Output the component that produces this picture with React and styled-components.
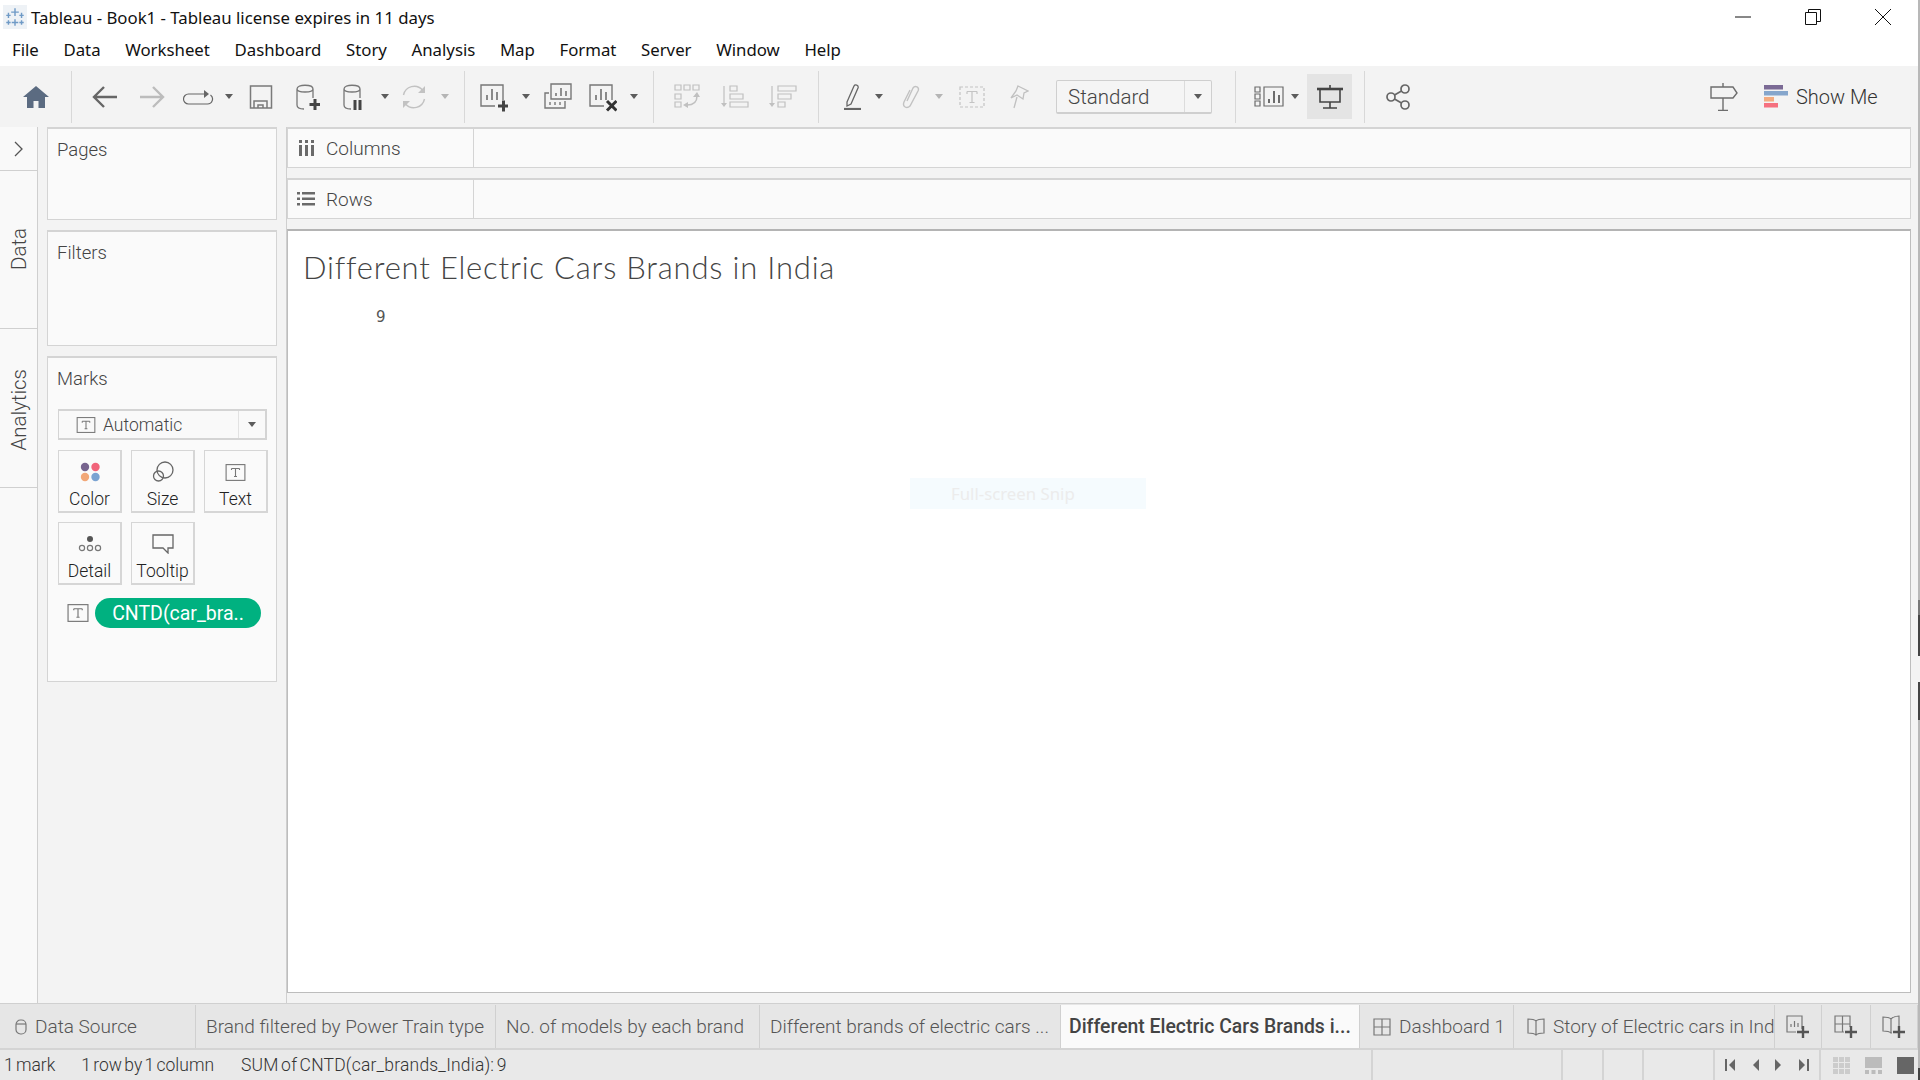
import React from "react"
import styled, { createGlobalStyle } from "styled-components"

const GlobalStyle = createGlobalStyle`
  html, body {
    margin: 0;
    padding: 0;
    background: #fff;
    overflow: hidden;
  }
  * {
    box-sizing: border-box;
  }
`

const uiFont = `"Roboto", "Liberation Sans", sans-serif`
const winFont = `"Noto Sans", "Open Sans", sans-serif`

const Window = styled.div`
  width: 1920px;
  height: 1080px;
  display: flex;
  flex-direction: column;
  background: #f3f3f3;
  padding-right: 2px;
  font-family: ${uiFont};
  color: #555;
  position: relative;
  overflow: hidden;
`
const EdgeStrip = styled.div`
  position: absolute;
  top: 0;
  right: 0;
  bottom: 0;
  width: 2px;
  background: linear-gradient(
    to bottom,
    #b8b8b8 0 600px,
    #777 600px 615px,
    #444 615px 656px,
    #f3f3f3 656px 682px,
    #444 682px 720px,
    #b8b8b8 720px 1068px,
    #444 1068px
  );
`
const TitleBar = styled.div`
  height: 33px;
  flex: none;
  display: flex;
  align-items: center;
  background: #fff;
  padding: 1px 0 0 3px;
  font-family: ${winFont};
  font-size: 16.8px;
  color: #111;
`
const TitleText = styled.span`
  margin-left: 4px;
`
const WinButtons = styled.div`
  margin-left: auto;
  display: flex;
  align-items: center;
`
const WinButton = styled.div`
  width: 70px;
  display: flex;
  justify-content: center;
`
const MenuBar = styled.div`
  height: 33px;
  flex: none;
  display: flex;
  align-items: center;
  background: #fff;
  padding-left: 12px;
  gap: 24.6px;
  font-family: ${winFont};
  font-size: 16.8px;
  color: #111;
`
const Toolbar = styled.div`
  height: 61px;
  flex: none;
  display: flex;
  align-items: center;
  padding-left: 22px;
  background: #f3f3f3;
`
const Tool = styled.div`
  flex: none;
  width: ${(p) => p.$w || 24}px;
  margin-left: ${(p) => p.$ml || 0}px;
  display: flex;
  justify-content: center;
  align-items: center;
`
const Caret = styled.div`
  flex: none;
  width: 0;
  height: 0;
  margin-left: ${(p) => p.$ml || 0}px;
  border-left: 4px solid transparent;
  border-right: 4px solid transparent;
  border-top: 5px solid ${(p) => (p.$off ? "#b5b5b5" : "#5c5c5c")};
`
const ToolSep = styled.div`
  flex: none;
  width: 1px;
  height: 52px;
  margin-left: ${(p) => p.$ml || 0}px;
  background: #d8d8d8;
`
const FitSelect = styled.div`
  flex: none;
  width: 156px;
  height: 34px;
  margin-left: ${(p) => p.$ml || 0}px;
  display: flex;
  align-items: center;
  border: 1px solid #cfcfcf;
  border-bottom-width: 2px;
  border-radius: 2px;
  background: #f5f5f5;
  font-size: 20.5px;
  font-weight: 300;
  color: #444;
`
const FitLabel = styled.div`
  flex: 1;
  padding: 1px 0 0 11px;
`
const FitArrow = styled.div`
  width: 27px;
  height: 100%;
  border-left: 1px solid #dcdcdc;
  display: flex;
  align-items: center;
  justify-content: center;
`
const PresentButton = styled.div`
  flex: none;
  width: 45px;
  height: 45px;
  margin-left: ${(p) => p.$ml || 0}px;
  background: #e4e4e4;
  display: flex;
  align-items: center;
  justify-content: center;
`
const ShowMeLabel = styled.div`
  margin-left: 8px;
  font-size: 20px;
  font-weight: 300;
  color: #333;
`
const Main = styled.div`
  flex: 1;
  min-height: 0;
  display: flex;
`
const Rail = styled.div`
  width: 38px;
  flex: none;
  display: flex;
  flex-direction: column;
  border-right: 1px solid #cfcfcf;
  background: #f9f9f9;
`
const RailToggle = styled.div`
  height: 44px;
  flex: none;
  display: flex;
  align-items: center;
  justify-content: center;
  border-bottom: 1px solid #d0d0d0;
`
const RailTab = styled.div`
  height: ${(p) => p.$h}px;
  flex: none;
  display: flex;
  align-items: center;
  justify-content: center;
  padding-top: ${(p) => p.$pt || 0}px;
  border-bottom: 1px solid #d0d0d0;
`
const RailLabel = styled.span`
  writing-mode: vertical-rl;
  transform: rotate(180deg);
  font-size: 20.5px;
  font-weight: 300;
  color: #444;
`
const Cards = styled.div`
  width: 249px;
  flex: none;
  padding: 0 9px 0 9px;
  display: flex;
  flex-direction: column;
  gap: 10px;
  border-right: 1px solid #cfcfcf;
`
const Card = styled.section`
  height: ${(p) => p.$h}px;
  flex: none;
  background: #fafafa;
  border: 1px solid #d4d4d4;
  border-top-width: 2px;
  padding: 0 9px;
`
const CardTitle = styled.div`
  font-size: 18.5px;
  font-weight: 300;
  color: #444;
  height: 41px;
  display: flex;
  align-items: center;
`
const MarkType = styled.div`
  height: 31px;
  margin: 10px 0 0 1px;
  display: flex;
  align-items: center;
  border: 1px solid #d4d4d4;
  border-width: 2px 2px 2px 1px;
  background: #f9f9f9;
`
const MarkTypeLabel = styled.div`
  flex: 1;
  display: flex;
  align-items: center;
  gap: 7px;
  padding-left: 17px;
  font-size: 17.5px;
  font-weight: 300;
  color: #444;
`
const MarkTypeArrow = styled.div`
  width: 27px;
  height: 100%;
  border-left: 1px solid #e2e2e2;
  display: flex;
  align-items: center;
  justify-content: center;
`
const MarkGrid = styled.div`
  display: grid;
  grid-template-columns: repeat(3, 64px);
  grid-auto-rows: 63px;
  gap: 9px;
  margin: 10px 0 0 1px;
`
const MarkButton = styled.div`
  border: 2px solid #d6d6d6;
  border-top-width: 1px;
  border-left-width: 1px;
  background: #fafafa;
  display: flex;
  flex-direction: column;
  align-items: center;
  justify-content: flex-end;
  gap: 5px;
  padding-bottom: 2px;
  font-size: 17.5px;
  font-weight: 300;
  color: #222;
`
const MarkIcon = styled.div`
  height: 24px;
  display: flex;
  align-items: center;
`
const PillRow = styled.div`
  display: flex;
  align-items: center;
  gap: 6px;
  margin: 13px 0 0 10px;
`
const Pill = styled.div`
  width: 166px;
  height: 30px;
  border-radius: 15px;
  background: #00b180;
  color: #fff;
  font-size: 19.5px;
  display: flex;
  align-items: center;
  justify-content: center;
`
const Workspace = styled.div`
  flex: 1;
  min-width: 0;
  display: flex;
  flex-direction: column;
  gap: 10px;
  padding: 0 7px 10px 0;
`
const Shelf = styled.div`
  height: 41px;
  flex: none;
  display: flex;
  background: #fafafa;
  border: 1px solid #d4d4d4;
  border-top-width: 2px;
`
const ShelfHead = styled.div`
  width: 186px;
  flex: none;
  border-right: 1px solid #d4d4d4;
  display: flex;
  align-items: center;
  gap: 11px;
  padding-left: ${(p) => p.$pl}px;
  font-size: 19px;
  font-weight: 300;
  color: #444;
`
const View = styled.div`
  flex: 1;
  min-height: 0;
  background: #fff;
  border: 1px solid #bdbdbd;
  border-top: 2px solid #b4b4b4;
  padding: 17px 0 0 15px;
`
const ViewTitle = styled.h1`
  margin: 0;
  font-family: "Lato", sans-serif;
  font-size: 31px;
  line-height: 38px;
  font-weight: 300;
  letter-spacing: 0.8px;
  color: #444;
`
const BigNumber = styled.div`
  margin: 21px 0 0 73px;
  font-size: 15px;
  line-height: 20px;
  color: #555;
  font-family: "DejaVu Sans", sans-serif;
`
const SnipGhost = styled.div`
  position: absolute;
  left: 910px;
  top: 478px;
  width: 236px;
  height: 31px;
  padding-left: 41px;
  display: flex;
  align-items: center;
  background: #f5fbfe;
  color: #ececec;
  font-family: ${winFont};
  font-size: 16.8px;
`
const TabStrip = styled.div`
  height: 47px;
  flex: none;
  display: flex;
  border-top: 1px solid #d0d0d0;
  border-bottom: 2px solid #d4d4d4;
  padding-top: 1px;
  background: #e6e6e6;
`
const Tab = styled.div`
  width: ${(p) => p.$w}px;
  flex: none;
  display: flex;
  align-items: center;
  gap: 8px;
  padding-left: ${(p) => p.$pl || 10}px;
  border-right: 1px solid #d0d0d0;
  background: ${(p) => (p.$active ? "#fafafa" : "#e6e6e6")};
  font-size: ${(p) => (p.$active ? 19.4 : 19)}px;
  font-weight: ${(p) => (p.$active ? 500 : 300)};
  color: ${(p) => (p.$active ? "#444" : "#555")};
  white-space: nowrap;
  overflow: hidden;
  > svg {
    flex: none;
  }
`
const AddTab = styled.div`
  width: ${(p) => p.$w}px;
  flex: none;
  display: flex;
  align-items: center;
  justify-content: center;
  border-right: 1px solid #d0d0d0;
`
const StatusBar = styled.div`
  height: 30px;
  flex: none;
  display: flex;
  align-items: center;
  background: #e9e9e9;
  font-size: 17.5px;
  font-weight: 300;
  word-spacing: -2px;
  color: #333;
`
const StatusText = styled.span`
  margin-left: ${(p) => p.$ml}px;
  letter-spacing: ${(p) => p.$ls || 0}px;
  white-space: nowrap;
`
const StatusCell = styled.div`
  width: ${(p) => p.$w}px;
  margin-left: ${(p) => (p.$push ? "auto" : 0)};
  height: 100%;
  flex: none;
  border-left: 2px solid #d4d4d4;
  display: flex;
  align-items: center;
  justify-content: center;
  gap: ${(p) => p.$gap || 0}px;
  padding-left: ${(p) => p.$pl || 0}px;
`

const Svg = ({ w = 24, h = 24, children, sw = 1.6, color = "#6a6a6a" }) => (
  <svg
    width={w}
    height={h}
    viewBox={`0 0 ${w} ${h}`}
    fill="none"
    stroke={color}
    strokeWidth={sw}
  >
    {children}
  </svg>
)

const LogoIcon = () => (
  <svg width="24" height="24" viewBox="0 0 22 22" stroke="#6f9ac6" strokeWidth="1.3">
    <rect width="22" height="22" fill="#eef2f6" stroke="none" />
    <path d="M11 3v7M7.500 6.500h7M11 13v6M8 16h6M5 7v5M3 9.500h4M17 7v5M15 9.500h4M5 14v4M3 16h4M17 14v4M15 16h4" />
  </svg>
)
const HomeIcon = () => (
  <svg width="26" height="22" viewBox="0 0 26 22">
    <path d="M13 0 0 11h4v11h6.500v-7h5v7H22V11h4z" fill="#5b6b81" />
  </svg>
)
const BackIcon = ({ flip, color }) => (
  <Svg w={26} h={24} sw={2.4} color={color}>
    <path
      d={flip ? "M1 12h23M14 2l10 10-10 10" : "M25 12H2M12 2 2 12l10 10"}
    />
  </Svg>
)
const LoopIcon = () => (
  <Svg w={32} h={16} sw={1.2} color="#666">
    <path d="M24 5H6.500a5 5 0 0 0 0 10h19a5 5 0 0 0 3-9" />
    <path d="m22 1 5 4-5 4z" fill="#666" stroke="none" />
  </Svg>
)
const SaveIcon = () => (
  <Svg w={24} h={24} sw={1.5} color="#7a7a7a">
    <path d="M1.500 1h21v22h-21z" />
    <path d="M5 23v-7h13v7M9 23v-3h5v3" />
  </Svg>
)
const CylBody = () => (
  <path d="M1 5c0-5 16-5 16 0v9M1 5c0 4 16 4 16 0M1 5v16c0 3 3 4 7 4" />
)
const DataAddIcon = () => (
  <Svg w={24} h={26} sw={1.3} color="#777">
    <CylBody />
    <path d="M19 15v11M13.500 20.500h11" stroke="#444" strokeWidth="3" />
  </Svg>
)
const DataPauseIcon = () => (
  <Svg w={24} h={26} sw={1.3} color="#777">
    <CylBody />
    <path d="M12 16v10M17 16v10" stroke="#444" strokeWidth="3" />
  </Svg>
)
const RefreshIcon = () => (
  <Svg w={26} h={26} sw={1.4} color="#c2c2c2">
    <path d="M2.500 11a11 11 0 0 1 19-5M23.500 15a11 11 0 0 1-19 5" />
    <path d="M24 2v7h-7zM2 24v-7h7z" fill="#c2c2c2" stroke="none" />
  </Svg>
)
const ChartBox = () => (
  <g transform="translate(0 2)">
    <path d="M23 16V1H1v21h14" />
    <path d="M7 16v-5M12 16V5M17 16V8" strokeWidth="1.7" />
  </g>
)
const NewSheetIcon = () => (
  <Svg w={28} h={30} sw={1.4} color="#777">
    <ChartBox />
    <path d="M23.500 18.500v11M18 24h11" stroke="#444" strokeWidth="3" />
  </Svg>
)
const DupIcon = () => (
  <Svg w={28} h={30} sw={1.4} color="#777">
    <path d="M7 2h20v15H7z" />
    <path d="M12 14v-3M17 14V6M22 14V9" strokeWidth="1.6" />
    <path d="M5 11H1v15h20v-7" />
    <path d="M6 23v-3M11 23v-3M16 23v-3" />
  </Svg>
)
const ClearIcon = () => (
  <Svg w={28} h={30} sw={1.4} color="#777">
    <ChartBox />
    <path d="m18 19 9.500 9.500M27.500 19 18 28.500" stroke="#333" strokeWidth="3" />
  </Svg>
)
const SwapIcon = () => (
  <Svg w={26} h={25} sw={1.2} color="#c0c0c0">
    <path d="M1 1h6v5H1zM10 1h6v5h-6zM19 1h6v5h-6zM1 10h6v5H1zM1 18h6v5H1z" />
    <path d="M13 21c6 0 10-3 10-9" strokeWidth="1.5" />
    <path d="M19 13l4-5 3 5zM14 18l-5 3 5 3z" fill="#c0c0c0" stroke="none" />
  </Svg>
)
const SortAscIcon = () => (
  <Svg w={28} h={24} sw={1.2} color="#c0c0c0">
    <path d="M3 1v18" />
    <path d="M0 18h6l-3 4z" fill="#c0c0c0" stroke="none" />
    <path d="M9 1h7v5H9zM9 9h13v5H9zM9 17h18v5H9z" />
  </Svg>
)
const SortDescIcon = () => (
  <Svg w={28} h={24} sw={1.2} color="#c0c0c0">
    <path d="M3 1v18" />
    <path d="M0 18h6l-3 4z" fill="#c0c0c0" stroke="none" />
    <path d="M9 1h18v5H9zM9 9h13v5H9zM9 17h7v5H9z" />
  </Svg>
)
const PenIcon = () => (
  <Svg w={18} h={26} sw={1.3} color="#666">
    <path d="M3 18 10 2c1-2 5-1 4 2L7 20l-4 2z" />
    <path d="M0 25h17" strokeWidth="2.200" />
  </Svg>
)
const ClipIcon = () => (
  <Svg w={20} h={24} sw={1.4} color="#c2c2c2">
    <path d="M6 16 12 3c2-3 7-1 5 3L9 21c-3 3-8 1-6-4l6-12" />
  </Svg>
)
const LabelIcon = () => (
  <Svg w={26} h={22} sw={1.2} color="#c4c4c4">
    <rect x="1" y="1" width="24" height="20" strokeDasharray="3 2" />
    <path d="M8 5.500h10M13 5.500v11M10.500 16.500h5M8 5.500V8M18 5.500V8" />
  </Svg>
)
const PinIcon = () => (
  <Svg w={20} h={24} sw={1.3} color="#c0c0c0">
    <path d="M9 1l10 5-4 2-1 6-6-4-6 3 5-7z" />
    <path d="M8 12 5 23" />
  </Svg>
)
const ShowMeSmallIcon = () => (
  <Svg w={30} h={21} sw={1.2} color="#6c6c6c">
    <path d="M1 1h5v5H1zM1 8h5v5H1zM1 15h5v5H1zM10 1h19v19H10z" />
    <path d="M15 17v-4M20 17V5M25 17V9" strokeWidth="2" />
  </Svg>
)
const PresentIcon = () => (
  <Svg w={26} h={24} sw={1.6} color="#444">
    <path d="M0 4h26" strokeWidth="2.600" />
    <path d="M13 0v3M3 4v13h20V4M13 17v6M6 23h14" />
  </Svg>
)
const ShareIcon = () => (
  <Svg w={24} h={26} sw={1.7} color="#666">
    <circle cx="5" cy="13" r="4" />
    <circle cx="19" cy="5" r="4" />
    <circle cx="19" cy="21" r="4" />
    <path d="M8.500 11 15.500 7M8.500 15l7 4" />
  </Svg>
)
const SignIcon = () => (
  <Svg w={28} h={28} sw={1.4} color="#6d6d6d">
    <path d="M1 4h22l4 6-4 5H1zM13 0v4M13 15v13M8 27.500h10" />
  </Svg>
)
const ShowMeBars = () => (
  <svg width="24" height="23" viewBox="0 0 24 23">
    <rect x="0" y="0" width="19" height="4.500" fill="#7b6a95" />
    <rect x="0" y="6" width="24" height="4.500" fill="#85a6cc" />
    <rect x="0" y="12" width="10" height="4.500" fill="#f3ab80" />
    <rect x="0" y="18" width="14" height="4.500" fill="#f5707f" />
  </svg>
)
const Chevron = () => (
  <Svg w={10} h={16} sw={1.3} color="#555">
    <path d="m1 1 7 7-7 7" />
  </Svg>
)
const ColumnsIcon = () => (
  <svg width="16" height="16" viewBox="0 0 16 16" fill="#6a6a6a">
    <path d="M0 0h3v3H0zM6 0h3v3H6zM12 0h3v3h-3zM0 5h3v11H0zM6 5h3v11H6zM12 5h3v11h-3z" />
  </svg>
)
const RowsIcon = () => (
  <svg width="18" height="16" viewBox="0 0 18 16" fill="#6a6a6a">
    <path d="M0 1h3v2.500H0zM5 1h13v2.500H5zM0 6.500h3V9H0zM5 6.500h13V9H5zM0 12h3v2.500H0zM5 12h13v2.500H5z" />
  </svg>
)
const TBox = ({ size = 16 }) => (
  <svg width={size + 4} height={size} viewBox="0 0 20 17" fill="none" stroke="#777" strokeWidth="1.1">
    <rect x=".6" y=".6" width="18.800" height="15.800" />
    <path d="M6 4.500h8M10 4.500v8M8.500 12.500h3M6 4.500V6M14 4.500V6" />
  </svg>
)
const ColorDots = () => (
  <svg width="20" height="20" viewBox="0 0 20 20">
    <circle cx="5" cy="5" r="4.200" fill="#77648e" />
    <circle cx="15.500" cy="5" r="4.200" fill="#f1647a" />
    <circle cx="5" cy="15" r="4.200" fill="#f2a777" />
    <circle cx="15.500" cy="15" r="4.200" fill="#7aa3d2" />
  </svg>
)
const SizeIcon = () => (
  <Svg w={22} h={22} sw={1.3} color="#666">
    <circle cx="13" cy="9" r="8" />
    <circle cx="6.500" cy="15" r="5" />
  </Svg>
)
const DetailIcon = () => (
  <svg width="24" height="18" viewBox="0 0 24 18" fill="none" stroke="#777" strokeWidth="1.2">
    <circle cx="12" cy="4" r="3" fill="#555" stroke="none" />
    <circle cx="4" cy="13" r="2.600" />
    <circle cx="12" cy="13" r="2.600" />
    <circle cx="20" cy="13" r="2.600" />
  </svg>
)
const BubbleIcon = () => (
  <Svg w={22} h={20} sw={1.3} color="#666">
    <path d="M1 1h20v13h-5v5l-5-5H1z" />
  </Svg>
)
const CylSmall = () => (
  <Svg w={12} h={16} sw={1.2} color="#777">
    <rect x="1" y="1" width="10" height="14" rx="4.500" />
    <path d="M1 5h10" />
  </Svg>
)
const GridIcon = () => (
  <Svg w={18} h={18} sw={1.2} color="#777">
    <path d="M1 1h16v16H1zM9 1v16M1 9h16" />
  </Svg>
)
const BookIcon = () => (
  <Svg w={18} h={18} sw={1.2} color="#777">
    <path d="M9 3c-2-2-5-2-8-2v14c3 0 6 0 8 2 2-2 5-2 8-2V1c-3 0-6 0-8 2zM9 3v14" />
  </Svg>
)
const AddSheetIcon = () => (
  <Svg w={24} h={24} sw={1.2} color="#777">
    <path d="M16 14V1H1v16h9" />
    <path d="M5 12v-3M8.500 12V6M12 12V8" />
    <path d="M17 11v12M11 17h12" stroke="#555" strokeWidth="2.400" />
  </Svg>
)
const AddDashIcon = () => (
  <Svg w={24} h={24} sw={1.2} color="#777">
    <path d="M16 12V1H1v16h9M8.500 1v16M1 9h15" />
    <path d="M17 11v12M11 17h12" stroke="#555" strokeWidth="2.400" />
  </Svg>
)
const AddStoryIcon = () => (
  <Svg w={24} h={24} sw={1.2} color="#777">
    <path d="M17 12V1c-3 0-6 1-8 3C7 2 4 2 1 2v14c3 0 6 0 8 2h1M9 4v14" />
    <path d="M17 11v12M11 17h12" stroke="#555" strokeWidth="2.400" />
  </Svg>
)
const NavIcon = ({ flip, bar, color = "#666" }) => (
  <svg width="12" height="14" viewBox="0 0 12 14" fill={color} transform={flip ? "scale(-1 1)" : undefined}>
    {bar && <rect x="0" y="1" width="2" height="12" />}
    <path d="M10 1v12L4 7z" />
  </svg>
)
const TileIcon = ({ mode }) => (
  <svg width="17" height="17" viewBox="0 0 17 17">
    {mode === 0 && (
      <path fill="#ccc" d="M0 0h5v5H0zM6 0h5v5H6zM12 0h5v5h-5zM0 6h5v5H0zM6 6h5v5H6zM12 6h5v5h-5zM0 12h5v5H0zM6 12h5v5H6zM12 12h5v5h-5z" />
    )}
    {mode === 1 && (
      <path fill="#bcbcbc" d="M0 0h17v11H0zM0 13h4v4H0zM6.500 13h4v4h-4zM13 13h4v4h-4z" />
    )}
    {mode === 2 && <rect width="17" height="17" fill="#666" />}
  </svg>
)

const menus = ["File", "Data", "Worksheet", "Dashboard", "Story", "Analysis", "Map", "Format", "Server", "Window", "Help"]

const App = () => (
  <Window>
    <GlobalStyle />
    <TitleBar>
      <LogoIcon />
      <TitleText>Tableau - Book1 - Tableau license expires in 11 days</TitleText>
      <WinButtons>
        <WinButton>
          <Svg w={16} h={16} sw={1} color="#111"><path d="M0 8h16" /></Svg>
        </WinButton>
        <WinButton>
          <Svg w={16} h={16} sw={1} color="#111"><path d="M.5 3.500h11v12H.5zM3.500 3.500V.5h12v12h-4" /></Svg>
        </WinButton>
        <WinButton>
          <Svg w={16} h={16} sw={1} color="#111"><path d="m0 0 16 16M16 0 0 16" /></Svg>
        </WinButton>
      </WinButtons>
    </TitleBar>
    <MenuBar>
      {menus.map((m) => (
        <span key={m}>{m}</span>
      ))}
    </MenuBar>
    <Toolbar>
      <Tool $w={28}><HomeIcon /></Tool>
      <ToolSep $ml={21} />
      <Tool $w={26} $ml={20}><BackIcon color="#666" /></Tool>
      <Tool $w={26} $ml={21}><BackIcon flip color="#bcbcbc" /></Tool>
      <Tool $w={32} $ml={17}><LoopIcon /></Tool>
      <Caret $ml={11} />
      <Tool $ml={16}><SaveIcon /></Tool>
      <Tool $ml={23}><DataAddIcon /></Tool>
      <Tool $ml={23}><DataPauseIcon /></Tool>
      <Caret $ml={14} />
      <Tool $w={26} $ml={12}><RefreshIcon /></Tool>
      <Caret $ml={14} $off />
      <ToolSep $ml={15} />
      <Tool $w={28} $ml={15}><NewSheetIcon /></Tool>
      <Caret $ml={14} />
      <Tool $w={28} $ml={14}><DupIcon /></Tool>
      <Tool $w={28} $ml={17}><ClearIcon /></Tool>
      <Caret $ml={13} />
      <ToolSep $ml={15} />
      <Tool $w={26} $ml={20}><SwapIcon /></Tool>
      <Tool $w={28} $ml={21}><SortAscIcon /></Tool>
      <Tool $w={28} $ml={20}><SortDescIcon /></Tool>
      <ToolSep $ml={21} />
      <Tool $w={20} $ml={24}><PenIcon /></Tool>
      <Caret $ml={12} />
      <Tool $w={22} $ml={17}><ClipIcon /></Tool>
      <Caret $ml={13} $off />
      <Tool $w={26} $ml={16}><LabelIcon /></Tool>
      <Tool $w={22} $ml={23}><PinIcon /></Tool>
      <FitSelect $ml={26}>
        <FitLabel>Standard</FitLabel>
        <FitArrow><Caret /></FitArrow>
      </FitSelect>
      <ToolSep $ml={23} />
      <Tool $w={30} $ml={18}><ShowMeSmallIcon /></Tool>
      <Caret $ml={7} />
      <PresentButton $ml={8}><PresentIcon /></PresentButton>
      <ToolSep $ml={12} />
      <Tool $ml={21}><ShareIcon /></Tool>
      <Tool $w={28} $ml={300}><SignIcon /></Tool>
      <Tool $ml={26}><ShowMeBars /></Tool>
      <ShowMeLabel>Show Me</ShowMeLabel>
    </Toolbar>
    <Main>
      <Rail>
        <RailToggle><Chevron /></RailToggle>
        <RailTab $h={158}><RailLabel>Data</RailLabel></RailTab>
        <RailTab $h={159} $pt={3}><RailLabel>Analytics</RailLabel></RailTab>
      </Rail>
      <Cards>
        <Card $h={93}><CardTitle>Pages</CardTitle></Card>
        <Card $h={116}><CardTitle>Filters</CardTitle></Card>
        <Card $h={326}>
          <CardTitle>Marks</CardTitle>
          <MarkType>
            <MarkTypeLabel><TBox />Automatic</MarkTypeLabel>
            <MarkTypeArrow><Caret /></MarkTypeArrow>
          </MarkType>
          <MarkGrid>
            <MarkButton><MarkIcon><ColorDots /></MarkIcon>Color</MarkButton>
            <MarkButton><MarkIcon><SizeIcon /></MarkIcon>Size</MarkButton>
            <MarkButton><MarkIcon><TBox size={17} /></MarkIcon>Text</MarkButton>
            <MarkButton><MarkIcon><DetailIcon /></MarkIcon>Detail</MarkButton>
            <MarkButton><MarkIcon><BubbleIcon /></MarkIcon>Tooltip</MarkButton>
          </MarkGrid>
          <PillRow>
            <TBox size={18} />
            <Pill>CNTD(car_bra..</Pill>
          </PillRow>
        </Card>
      </Cards>
      <Workspace>
        <Shelf>
          <ShelfHead $pl={11}><ColumnsIcon />Columns</ShelfHead>
        </Shelf>
        <Shelf>
          <ShelfHead $pl={9}><RowsIcon />Rows</ShelfHead>
        </Shelf>
        <View>
          <ViewTitle>Different Electric Cars Brands in India</ViewTitle>
          <BigNumber>9</BigNumber>
        </View>
      </Workspace>
    </Main>
    <TabStrip>
      <Tab $w={196} $pl={15}><CylSmall />Data Source</Tab>
      <Tab $w={300}>Brand filtered by Power Train type</Tab>
      <Tab $w={264}>No. of models by each brand</Tab>
      <Tab $w={301}>Different brands of electric cars ...</Tab>
      <Tab $w={299} $pl={8} $active>Different Electric Cars Brands i...</Tab>
      <Tab $w={154} $pl={13}><GridIcon />Dashboard 1</Tab>
      <Tab $w={261} $pl={13}><BookIcon />Story of Electric cars in India</Tab>
      <AddTab $w={47}><AddSheetIcon /></AddTab>
      <AddTab $w={49}><AddDashIcon /></AddTab>
      <AddTab $w={47}><AddStoryIcon /></AddTab>
    </TabStrip>
    <StatusBar>
      <StatusText $ml={4}>1 mark</StatusText>
      <StatusText $ml={26}>1 row by 1 column</StatusText>
      <StatusText $ml={27} $ls={0.2}>SUM of CNTD(car_brands_India): 9</StatusText>
      <StatusCell $w={190} $push />
      <StatusCell $w={41} />
      <StatusCell $w={40} />
      <StatusCell $w={71} />
      <StatusCell $w={106} $gap={12}>
        <NavIcon bar />
        <NavIcon />
        <NavIcon flip />
        <NavIcon flip bar />
      </StatusCell>
      <StatusCell $w={99} $gap={15} $pl={8}>
        <TileIcon mode={0} />
        <TileIcon mode={1} />
        <TileIcon mode={2} />
      </StatusCell>
    </StatusBar>
    <SnipGhost>Full-screen Snip</SnipGhost>
    <EdgeStrip />
  </Window>
)

export default App
